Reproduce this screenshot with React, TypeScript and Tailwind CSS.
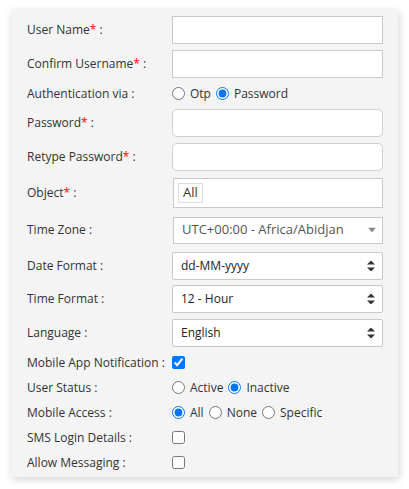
const Star = () => <span className="text-[#ff0000]">*</span>;

interface RowProps {
  label: React.ReactNode;
  h: string;
  children?: React.ReactNode;
}

const Row: React.FC<RowProps> = ({ label, h, children }) => (
  <div className={`flex items-center ${h}`}>
    <div className="w-[145px] shrink-0 whitespace-nowrap">{label}</div>
    <div className="flex items-center">{children}</div>
  </div>
);

const UpDown = () => (
  <svg width="8" height="11" viewBox="0 0 8 11" className="absolute right-[7px] top-1/2 -translate-y-1/2">
    <path d="M4 0L8 4H0Z" fill="#333" />
    <path d="M4 11L8 7H0Z" fill="#333" />
  </svg>
);

const SelectBox: React.FC<{ value: string }> = ({ value }) => (
  <div className="relative w-[211px] h-[28px] border border-[#c9c9c9] bg-white rounded-[2px] flex items-center pl-[8px] text-[#222]">
    {value}
    <UpDown />
  </div>
);

const Radio: React.FC<{ name: string; label: string; checked?: boolean }> = ({ name, label, checked }) => (
  <label className="flex items-center mr-[5px]">
    <input type="radio" name={name} defaultChecked={checked} className="m-0 w-[13px] h-[13px]" />
    <span className="ml-[5px]">{label}</span>
  </label>
);

const Check: React.FC<{ checked?: boolean }> = ({ checked }) => (
  <input type="checkbox" defaultChecked={checked} className="m-0 w-[13px] h-[13px]" />
);

export default function App() {
  return (
    <div className="bg-white w-[409px] h-[489px] pt-[10px] pl-[11px] font-['Open_Sans',sans-serif] text-[12px] text-[#333]">
      <div className="w-[387px] h-[467px] bg-[#f4f4f4] shadow-[1px_2px_8px_rgba(0,0,0,0.18)] pl-[16px] pt-[3px]">
        <Row label={<>User Name<Star /> :</>} h="h-[34px]">
          <div className="w-[211px] h-[28px] border border-[#c9c9c9] bg-white" />
        </Row>
        <Row label={<>Confirm Username<Star /> :</>} h="h-[34px]">
          <div className="w-[211px] h-[28px] border border-[#c9c9c9] bg-white" />
        </Row>
        <Row label="Authentication via :" h="h-[25px]">
          <Radio name="auth" label="Otp" />
          <Radio name="auth" label="Password" checked />
        </Row>
        <Row label={<>Password<Star /> :</>} h="h-[34px]">
          <div className="w-[211px] h-[28px] border border-[#d0d0d0] rounded-[5px] bg-white" />
        </Row>
        <Row label={<>Retype Password<Star /> :</>} h="h-[34px]">
          <div className="w-[211px] h-[28px] border border-[#d0d0d0] rounded-[5px] bg-white" />
        </Row>
        <Row label={<>Object<Star /> :</>} h="h-[37px]">
          <div className="ml-px w-[210px] h-[30px] border border-[#c9c9c9] bg-white flex items-center pl-[4px]">
            <span className="h-[20px] px-[4px] border border-[#dcdcdc] flex items-center text-[13px]">All</span>
          </div>
        </Row>
        <Row label="Time Zone :" h="h-[38px]">
          <div className="relative ml-px w-[210px] h-[27px] border border-[#c9c9c9] bg-white flex items-center pl-[8px] text-[13px] text-[#555]">
            UTC+00:00 - Africa/Abidjan
            <svg width="8" height="5" viewBox="0 0 8 5" className="absolute right-[6px] top-1/2 -translate-y-1/2">
              <path d="M0 0H8L4 5Z" fill="#888" />
            </svg>
          </div>
        </Row>
        <Row label="Date Format :" h="h-[33px]">
          <SelectBox value="dd-MM-yyyy" />
        </Row>
        <Row label="Time Format :" h="h-[34px]">
          <SelectBox value="12 - Hour" />
        </Row>
        <Row label="Language :" h="h-[34px]">
          <SelectBox value="English" />
        </Row>
        <Row label="Mobile App Notification :" h="h-[25px]">
          <Check checked />
        </Row>
        <Row label="User Status :" h="h-[25px]">
          <Radio name="status" label="Active" />
          <Radio name="status" label="Inactive" checked />
        </Row>
        <Row label="Mobile Access :" h="h-[25px]">
          <Radio name="access" label="All" checked />
          <Radio name="access" label="None" />
          <Radio name="access" label="Specific" />
        </Row>
        <Row label="SMS Login Details :" h="h-[25px]">
          <Check />
        </Row>
        <Row label="Allow Messaging :" h="h-[25px]">
          <Check />
        </Row>
      </div>
    </div>
  );
}
